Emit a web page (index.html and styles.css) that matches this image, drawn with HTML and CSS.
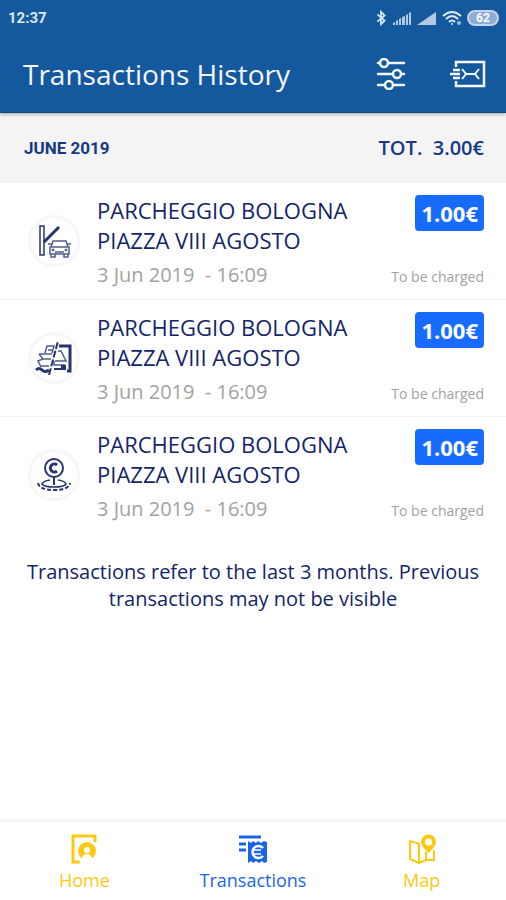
FILE: index.html
```html
<!DOCTYPE html>
<html lang="en">
<head>
<meta charset="utf-8">
<meta name="viewport" content="width=device-width, initial-scale=1">
<title>Transactions History</title>
<link rel="stylesheet" href="styles.css">
</head>
<body>
<svg class="defs" width="0" height="0" aria-hidden="true">
  <symbol id="signal" viewBox="0 0 20 14">
    <path d="M1 14v-2l2-1v3zM4 14v-4l2-1v5zM7 14V8l2-1v7zM10 14V6l3-1v9zM14 14V4l2-1v11zM17 14V2l2-1v13z"/>
  </symbol>
</svg>
<header class="top">
  <div class="status">
    <time>12:37</time>
    <div class="status-icons">
      <svg width="12" height="16" viewBox="0 0 12 18" fill="none" stroke="currentColor" stroke-width="2"><path d="M2 5l8 7-4 4V2l4 4-8 7"/></svg>
      <svg width="20" height="14" fill="currentColor" opacity=".8"><use href="#signal"/></svg>
      <svg width="20" height="14" viewBox="0 0 20 14" fill="currentColor" opacity=".8"><path d="M0 14L19 1v13z"/></svg>
      <svg width="20" height="16" viewBox="0 0 20 16" fill="none" stroke="currentColor" stroke-width="2"><path d="M1 6q9-8 18 0M4 9q6-6 12 0M7 12q3-3 6 0"/><circle cx="10" cy="14" r="1" fill="currentColor" stroke="none"/><circle cx="17" cy="13" r="2" fill="currentColor" stroke="none" opacity=".7"/></svg>
      <span class="battery">62</span>
    </div>
  </div>
  <div class="bar">
    <h1>Transactions History</h1>
    <button class="icon-btn" type="button" aria-label="Filter">
      <svg width="30" height="32" viewBox="0 0 30 32" fill="none" stroke="currentColor" stroke-width="2.500" stroke-linecap="round"><path d="M2 5h2M12 5h16M2 16h15M25 16h3M2 27h7M17 27h11"/><circle cx="8" cy="5" r="4"/><circle cx="21" cy="16" r="4"/><circle cx="13" cy="27" r="4"/></svg>
    </button>
    <button class="icon-btn" type="button" aria-label="Send ticket">
      <svg width="36" height="28" viewBox="0 0 36 28" fill="none" stroke="currentColor" stroke-width="2.500"><path d="M6 7V2h28v24H6v-5M3 10h7M0 14h10M3 18h7"/><path d="M12 9l4 5-4 5M29 9l-4 5 4 5M16 14h9" stroke-width="2"/></svg>
    </button>
  </div>
</header>
<main>
  <section>
    <div class="month">
      <h2>JUNE 2019</h2>
      <p class="total">TOT.&nbsp; 3.00€</p>
    </div>
    <ul class="list">
      <li class="item">
        <span class="badge"><svg width="34" height="34" viewBox="0 0 34 34" fill="none" stroke="currentColor"><path d="M3 2h4v29H3z" stroke-width="1.500"/><path d="M7 18L22 3" stroke-width="3"/><path d="M16 17h13l2 6H14zM11 20h4M30 20h4M13 23h19v7H13zM14 30v3h4v-3M27 30v3h4v-3M18 28h9" stroke-width="1.500" opacity=".8"/><circle cx="16" cy="26" r="1"/><circle cx="29" cy="26" r="1"/></svg></span>
        <div class="info"><h3>PARCHEGGIO BOLOGNA<br>PIAZZA VIII AGOSTO</h3><p class="date">3 Jun 2019&nbsp; - 16:09</p></div>
        <div class="side"><span class="price">1.00€</span><span class="state">To be charged</span></div>
      </li>
      <li class="item">
        <span class="badge"><svg width="38" height="34" viewBox="0 0 38 34" fill="none" stroke="currentColor"><path d="M10 12l2-7h7l-2 7M4 13h13M4 13l4 5-5 2 3 6M8 18h8M5 25h9M13 9h4" stroke-width="1.500" opacity=".8"/><path d="M1 29q3-3 6 0t7 0" stroke-width="3"/><path d="M14 34L23 0" stroke-width="2" stroke-dasharray="7 2"/><path d="M24 5h11v25h-3" stroke-width="3"/><path d="M23 10h3l5 10H20M19 20v4h11" stroke-width="1.500" opacity=".8"/><path d="M26 24h5v5h-5z" fill="currentColor" stroke="none"/><path d="M19 28h7" stroke-width="2"/></svg></span>
        <div class="info"><h3>PARCHEGGIO BOLOGNA<br>PIAZZA VIII AGOSTO</h3><p class="date">3 Jun 2019&nbsp; - 16:09</p></div>
        <div class="side"><span class="price">1.00€</span><span class="state">To be charged</span></div>
      </li>
      <li class="item">
        <span class="badge"><svg width="34" height="34" viewBox="0 0 34 34" fill="none" stroke="currentColor"><circle cx="17" cy="10" r="9" stroke-width="2"/><path d="M20 7a4 4 0 1 0 0 6" stroke-width="3"/><path d="M17 19v8" stroke-width="2"/><path d="M13 22Q6 23 5 26q2 3 12 3t12-3q-1-3-8-4" stroke-width="1.500"/><path d="M1 25q1 7 16 7t16-7" stroke-width="2" stroke-dasharray="4 2"/></svg></span>
        <div class="info"><h3>PARCHEGGIO BOLOGNA<br>PIAZZA VIII AGOSTO</h3><p class="date">3 Jun 2019&nbsp; - 16:09</p></div>
        <div class="side"><span class="price">1.00€</span><span class="state">To be charged</span></div>
      </li>
    </ul>
  </section>
  <p class="note">Transactions refer to the last 3 months. Previous transactions may not be visible</p>
</main>
<nav class="tabs">
  <a class="tab" href="#home">
    <svg width="28" height="30" viewBox="0 0 28 30" fill="none" stroke="currentColor"><path d="M10 28H3V2h22v6" stroke-width="3"/><circle cx="17" cy="17" r="9" fill="currentColor" stroke="none"/><path d="M9 28l4-6 2-2h4l2 2 4 6z" fill="#fff" stroke="none"/><circle cx="17" cy="16" r="3" fill="#fff" stroke="none"/></svg>
    Home
  </a>
  <a class="tab active" href="#transactions">
    <svg width="30" height="30" viewBox="0 0 30 30" fill="none" stroke="currentColor"><path d="M1 3h22M1 10h7M1 16h7" stroke-width="3"/><path d="M10 7l3 2 2-2 3 2 2-2 3 2 3-2 3 1v20l-3 1-2-2-3 2-3-2-3 2-2-2-3 2z" fill="currentColor" stroke="none"/><path d="M25 14a6 6 0 1 0 0 8" stroke="#fff" stroke-width="2.500"/><path d="M15 16h8M15 20h8" stroke="#fff" stroke-width="1.500"/></svg>
    Transactions
  </a>
  <a class="tab" href="#map">
    <svg width="30" height="30" viewBox="0 0 30 30" fill="none" stroke="currentColor"><path d="M13 10L3 7v18l9 4 7-3V18M12 10v18M19 26h8V16" stroke-width="2"/><path d="M14 8a7.500 7.500 0 1 1 15 0q0 4-7.500 11Q14 12 14 8zm4 0a3.500 3.500 0 1 0 7 0 3.500 3.500 0 1 0-7 0z" fill="currentColor" fill-rule="evenodd" stroke="none"/></svg>
    Map
  </a>
</nav>
</body>
</html>
```
FILE: styles.css
```css
* { box-sizing: border-box; }
body {
  margin: 0;
  min-height: 100vh;
  display: flex;
  flex-direction: column;
  background: #fff;
  color: #14246b;
  font-family: "Open Sans", "Noto Sans", sans-serif;
}
h1, h2, h3, p, ul { margin: 0; padding: 0; font-weight: 400; }
svg { display: block; flex: none; }
.defs { position: absolute; }
.top {
  position: relative;
  background: #14599e;
  color: #f4f7ff;
  border-bottom: 1px solid #0d4683;
  box-shadow: 0 1px 4px rgba(0, 0, 0, .35);
}
.status {
  display: flex;
  justify-content: space-between;
  align-items: center;
  height: 35px;
  padding: 0 7px 0 8px;
  font: 700 15px/20px Roboto, sans-serif;
  color: #dbe6f6;
}
.status-icons { display: flex; align-items: center; gap: 5px; }
.battery {
  width: 32px;
  border: 2px solid #c6d5ea;
  border-radius: 8px;
  background: #8facd2;
  color: #fff;
  font-size: 12px;
  line-height: 12px;
  text-align: center;
}
.bar {
  display: flex;
  align-items: center;
  gap: 44px;
  height: 77px;
  padding: 0 20px 0 23px;
}
.bar h1 { flex: 1; font-size: 28px; line-height: 36px; white-space: nowrap; }
.icon-btn { padding: 0; border: 0; background: none; color: inherit; }
main { flex: 1; }
.month {
  display: flex;
  justify-content: space-between;
  align-items: center;
  height: 70px;
  padding: 0 22px 0 24px;
  background: #f4f4f4;
  color: #163a85;
}
.month h2 { font: 700 17px/24px Roboto, sans-serif; }
.total { font-size: 20px; line-height: 24px; font-weight: 600; }
.list { list-style: none; }
.item {
  display: flex;
  padding: 12px 22px 8px 28px;
  border-bottom: 1px solid #f3f3f3;
}
.item:last-child { border-bottom-color: transparent; }
.badge {
  display: grid;
  place-items: center;
  width: 52px;
  height: 52px;
  margin-top: 20px;
  border: 3px solid #f7f7f7;
  border-radius: 50%;
  color: #26356f;
}
.info { flex: 1; padding-left: 17px; }
.info h3 { font-size: 22px; line-height: 30px; }
.date { padding-top: 4px; color: #a2a2a2; font-size: 20px; line-height: 32px; }
.side {
  display: flex;
  flex-direction: column;
  align-items: flex-end;
  justify-content: space-between;
  padding-bottom: 4px;
}
.price {
  padding: 0 6px;
  border-radius: 4px;
  background: #176cff;
  color: #fff;
  font-size: 22px;
  line-height: 36px;
  font-weight: 700;
}
.state { color: #a2a2a2; font-size: 14px; line-height: 20px; }
.note {
  padding: 24px 24px;
  font-size: 20px;
  line-height: 27px;
  text-align: center;
}
.tabs {
  display: grid;
  grid-template-columns: repeat(3, 1fr);
  height: 81px;
  border-top: 3px solid #f6f6f6;
}
.tab {
  display: flex;
  flex-direction: column;
  align-items: center;
  gap: 4px;
  padding-top: 12px;
  color: #fbc911;
  font-size: 18px;
  line-height: 24px;
  text-decoration: none;
}
.tab.active { color: #1b64e8; }
```
